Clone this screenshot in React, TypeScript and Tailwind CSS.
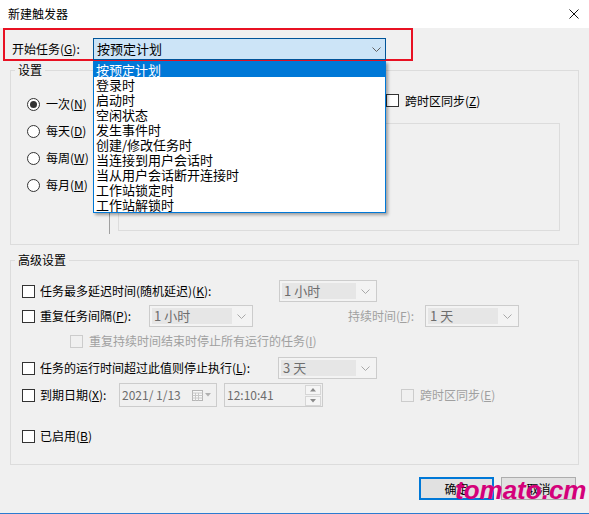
import React from 'react';

const Chevron = ({ color = '#606060' }: { color?: string }) => (
  <svg width="9" height="5" viewBox="0 0 9 5">
    <polyline points="0.5,0.5 4.5,4.5 8.5,0.5" fill="none" stroke={color} strokeWidth="1" />
  </svg>
);

const Check = ({ disabled = false }: { disabled?: boolean }) => (
  <span
    className={
      disabled
        ? 'inline-block h-[13px] w-[13px] shrink-0 border border-[#cccccc] bg-[#f0f0f0]'
        : 'inline-block h-[13px] w-[13px] shrink-0 border border-[#333333] bg-white'
    }
  />
);

const Radio = ({ label, k, checked = false }: { label: string; k: string; checked?: boolean }) => (
  <div className="flex h-[20px] items-center gap-[6px]">
    <span className="flex h-[13px] w-[13px] items-center justify-center rounded-full border border-[#333333] bg-white">
      {checked && <span className="h-[7px] w-[7px] rounded-full bg-[#333333]" />}
    </span>
    <span>
      {label}(<u>{k}</u>)
    </span>
  </div>
);

const DisabledCombo = ({ width, text }: { width: string; text: string }) => (
  <div className={`${width} flex h-[22px] items-center border border-[#cccccc] bg-[#f3f3f3] p-[2px]`}>
    <div className="h-full flex-1 bg-[#e6e6e6] pl-[2px] text-[13px] leading-[16px] text-[#6d6d6d]">{text}</div>
    <div className="flex w-[18px] justify-center">
      <Chevron color="#a8a8a8" />
    </div>
  </div>
);

const items = [
  '按预定计划',
  '登录时',
  '启动时',
  '空闲状态',
  '发生事件时',
  '创建/修改任务时',
  '当连接到用户会话时',
  '当从用户会话断开连接时',
  '工作站锁定时',
  '工作站解锁时',
];

export default function App() {
  return (
    <div className="relative h-[514px] w-[589px] overflow-hidden border-b border-[#2b7bd0] bg-[#f0f0f0] font-['Noto_Sans_CJK_SC',sans-serif] text-[12px] leading-[16px] text-black">
      {/* title bar */}
      <div className="flex h-[28px] items-center justify-between bg-white pl-[8px] pr-[10px]">
        <span className="text-[12px]">新建触发器</span>
        <svg width="10" height="10" viewBox="0 0 10 10">
          <path d="M0.5 0.5 L9.5 9.5 M9.5 0.5 L0.5 9.5" stroke="#111" strokeWidth="1" />
        </svg>
      </div>

      {/* begin task row, highlighted */}
      <div className="ml-[3px] flex h-[33px] w-[410px] items-start border-2 border-[#e81123] pl-[7px] pt-[8px]">
        <div className="flex h-[22px] w-[81px] items-center">
          开始任务(<u>G</u>):
        </div>
        <div className="flex h-[22px] w-[293px] items-center justify-between border border-[#005499] bg-[#cce4f7] pl-[3px] pr-[4px] text-[13px]">
          <span>按预定计划</span>
          <Chevron />
        </div>
      </div>

      {/* settings group */}
      <fieldset className="mx-[10px] mt-[1px] border border-[#dcdcdc]">
        <legend className="ml-[4px] px-[3px] text-[12px] leading-[16px]">设置</legend>
        <div className="flex h-[166px] pl-[16px]">
          <div className="flex w-[82px] flex-col gap-[7px] pt-[16px]">
            <Radio label="一次" k="N" checked />
            <Radio label="每天" k="D" />
            <Radio label="每周" k="W" />
            <Radio label="每月" k="M" />
          </div>
          <div className="my-[10px] w-px bg-[#a0a0a0]" />
          <div className="ml-[8px] flex flex-col pt-[16px]">
            <div className="ml-[268px] flex h-[13px] items-center gap-[6px]">
              <Check />
              <span>
                跨时区同步(<u>Z</u>)
              </span>
            </div>
            <div className="mt-[16px] h-[108px] w-[442px] border border-[#dcdcdc]" />
          </div>
        </div>
      </fieldset>

      {/* advanced group */}
      <fieldset className="mx-[10px] mt-[7px] border border-[#dcdcdc]">
        <legend className="ml-[4px] px-[3px] text-[12px] leading-[16px]">高级设置</legend>
        <div className="flex h-[196px] flex-col pl-[11px] pt-[12px]">
          <div className="flex h-[22px] items-center">
            <div className="flex w-[257px] items-center gap-[5px]">
              <Check />
              <span>
                任务最多延迟时间(随机延迟)(<u>K</u>):
              </span>
            </div>
            <DisabledCombo width="w-[98px]" text="1 小时" />
          </div>

          <div className="mt-[3px] flex h-[22px] items-center">
            <div className="flex w-[127px] items-center gap-[5px]">
              <Check />
              <span>
                重复任务间隔(<u>P</u>):
              </span>
            </div>
            <DisabledCombo width="w-[104px]" text="1 小时" />
            <span className="ml-[95px] w-[77px] text-[#a0a0a0]">
              持续时间(<u>F</u>):
            </span>
            <DisabledCombo width="w-[94px]" text="1 天" />
          </div>

          <div className="mt-[6px] flex h-[16px] items-center gap-[6px] pl-[48px] text-[#a0a0a0]">
            <Check disabled />
            <span>
              重复持续时间结束时停止所有运行的任务(<u>I</u>)
            </span>
          </div>

          <div className="mt-[8px] flex h-[22px] items-center">
            <div className="flex w-[256px] items-center gap-[5px]">
              <Check />
              <span>
                任务的运行时间超过此值则停止执行(<u>L</u>):
              </span>
            </div>
            <DisabledCombo width="w-[99px]" text="3 天" />
          </div>

          <div className="mt-[4px] flex h-[24px] items-center">
            <div className="flex w-[97px] items-center gap-[5px]">
              <Check />
              <span>
                到期日期(<u>X</u>):
              </span>
            </div>
            <div className="flex h-[24px] w-[98px] items-center justify-between border border-[#cccccc] bg-[#f0f0f0] pl-[2px] pr-[5px] text-[#6d6d6d]">
              <span>2021/ 1/13</span>
              <span className="flex items-center gap-[2px]">
                <svg width="11" height="11" viewBox="0 0 11 11">
                  <rect x="0.5" y="0.5" width="10" height="10" fill="#f7f7f7" stroke="#b5b5b5" />
                  <path d="M0.5 3 H10.5 M3.5 3 V10.5 M6.5 3 V10.5 M0.5 5.5 H10.5 M0.5 8 H10.5" stroke="#c8c8c8" />
                </svg>
                <svg width="6" height="4" viewBox="0 0 6 4">
                  <polygon points="0,0 6,0 3,3.5" fill="#b0b0b0" />
                </svg>
              </span>
            </div>
            <div className="ml-[7px] flex h-[24px] w-[99px] items-center justify-between border border-[#cccccc] bg-[#f0f0f0] pl-[2px] pr-[1px] text-[#6d6d6d]">
              <span>12:10:41</span>
              <div className="flex flex-col gap-[1px]">
                <div className="flex h-[10px] w-[16px] items-center justify-center border border-[#d6d6d6] bg-[#f5f5f5]">
                  <svg width="6" height="4" viewBox="0 0 6 4">
                    <polygon points="0,3.5 6,3.5 3,0" fill="#8a8a8a" />
                  </svg>
                </div>
                <div className="flex h-[10px] w-[16px] items-center justify-center border border-[#d6d6d6] bg-[#f5f5f5]">
                  <svg width="6" height="4" viewBox="0 0 6 4">
                    <polygon points="0,0 6,0 3,3.5" fill="#8a8a8a" />
                  </svg>
                </div>
              </div>
            </div>
            <div className="ml-[78px] flex items-center gap-[6px] text-[#a0a0a0]">
              <Check disabled />
              <span>
                跨时区同步(<u>E</u>)
              </span>
            </div>
          </div>

          <div className="mt-[21px] flex h-[16px] items-center gap-[5px]">
            <Check />
            <span>
              已启用(<u>B</u>)
            </span>
          </div>
        </div>
      </fieldset>

      {/* buttons */}
      <div className="mt-[12px] flex justify-end gap-[7px] pr-[13px]">
        <button className="h-[23px] w-[75px] border-2 border-[#0078d7] bg-[#e1e1e1] text-[12px]">确定</button>
        <button className="h-[23px] w-[75px] border border-[#adadad] bg-[#e1e1e1] text-[12px]">取消</button>
      </div>

      {/* open dropdown list */}
      <div className="absolute left-[93px] top-[61px] w-[293px] border border-[#0078d7] bg-white text-[13px] leading-[15px] shadow-[2px_2px_3px_rgba(0,0,0,0.35)]">
        {items.map((t, i) => (
          <div key={t} className={i === 0 ? 'h-[15px] bg-[#0078d7] pl-[2px] text-white' : 'h-[15px] pl-[2px]'}>
            {t}
          </div>
        ))}
      </div>

      {/* watermark */}
      <div className="absolute left-[455px] top-[477px] font-['Liberation_Sans',sans-serif] text-[26px] font-bold italic leading-none text-[#d4007a]">
        tomato.cm
      </div>
    </div>
  );
}
